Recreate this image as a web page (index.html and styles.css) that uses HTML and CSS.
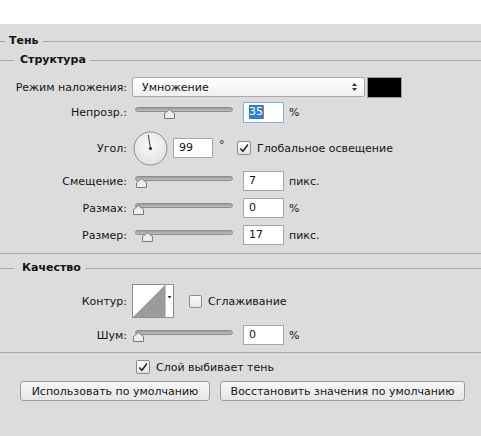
FILE: index.html
```html
<!DOCTYPE html>
<html lang="ru">
<head>
<meta charset="utf-8">
<link rel="stylesheet" href="styles.css">
</head>
<body>
<div class="top"></div>
<div class="panel">
  <div class="legend l1"><span>Тень</span></div>
  <div class="legend l2"><span>Структура</span></div>

  <div class="row r-blend">
    <div class="lbl">Режим наложения:</div>
    <div class="select"><span>Умножение</span>
      <svg class="updown" width="7" height="10" viewBox="0 0 7 10"><path d="M3.5 1 L6 4 L1 4 Z M3.5 9 L6 6 L1 6 Z" fill="#333"/></svg>
    </div>
    <div class="swatch"></div>
  </div>

  <div class="row r-opacity">
    <div class="lbl">Непрозр.:</div>
    <div class="slider"><div class="track"></div><svg class="thumb" style="left:32px" width="11" height="10" viewBox="0 0 11 10"><path d="M5.5 0.5 L10.5 4.5 L10.5 9.5 L0.5 9.5 L0.5 4.5 Z" fill="#ececec" stroke="#7a7a7a"/></svg></div>
    <div class="num focus"><span class="sel">35</span><span class="caret"></span></div>
    <div class="unit">%</div>
  </div>

  <div class="row r-angle">
    <div class="lbl">Угол:</div>
    <svg class="dial" width="35" height="35" viewBox="0 0 35 35">
      <defs><radialGradient id="dg" cx="50%" cy="40%" r="60%"><stop offset="0" stop-color="#fafafa"/><stop offset="1" stop-color="#e2e2e2"/></radialGradient></defs>
      <circle cx="17.5" cy="17.5" r="16.5" fill="url(#dg)" stroke="#8c8c8c"/>
      <line x1="17.5" y1="17.5" x2="15.3" y2="3.8" stroke="#333" stroke-width="1"/>
      <circle cx="17.5" cy="17.5" r="1.6" fill="#222"/>
    </svg>
    <div class="num n-angle">99</div>
    <div class="deg">°</div>
    <div class="cb checked"><svg width="13" height="13" viewBox="0 0 13 13"><path d="M2.5 6.5 L5.3 9.5 L10.8 2.2" fill="none" stroke="#222" stroke-width="1.6"/></svg></div>
    <div class="cbtext">Глобальное освещение</div>
  </div>

  <div class="row r-offset">
    <div class="lbl">Смещение:</div>
    <div class="slider"><div class="track"></div><svg class="thumb" style="left:4px" width="11" height="10" viewBox="0 0 11 10"><path d="M5.5 0.5 L10.5 4.5 L10.5 9.5 L0.5 9.5 L0.5 4.5 Z" fill="#ececec" stroke="#7a7a7a"/></svg></div>
    <div class="num">7</div>
    <div class="unit">пикс.</div>
  </div>

  <div class="row r-spread">
    <div class="lbl">Размах:</div>
    <div class="slider"><div class="track"></div><svg class="thumb" style="left:1px" width="11" height="10" viewBox="0 0 11 10"><path d="M5.5 0.5 L10.5 4.5 L10.5 9.5 L0.5 9.5 L0.5 4.5 Z" fill="#ececec" stroke="#7a7a7a"/></svg></div>
    <div class="num">0</div>
    <div class="unit">%</div>
  </div>

  <div class="row r-size">
    <div class="lbl">Размер:</div>
    <div class="slider"><div class="track"></div><svg class="thumb" style="left:10px" width="11" height="10" viewBox="0 0 11 10"><path d="M5.5 0.5 L10.5 4.5 L10.5 9.5 L0.5 9.5 L0.5 4.5 Z" fill="#ececec" stroke="#7a7a7a"/></svg></div>
    <div class="num">17</div>
    <div class="unit">пикс.</div>
  </div>

  <div class="sep s1"></div>

  <div class="legend l3"><span>Качество</span></div>

  <div class="row r-contour">
    <div class="lbl">Контур:</div>
    <svg class="contour" width="42" height="34" viewBox="0 0 42 34">
      <rect x="0.5" y="0.5" width="41" height="33" fill="#ffffff" stroke="#8e8e8e"/>
      <path d="M1 33 L33 1 L33 33 Z" fill="#9b9b9b"/>
      <line x1="33.5" y1="1" x2="33.5" y2="33" stroke="#c4c4c4"/>
      <path d="M35.5 12 L39.5 12 L37.5 14.5 Z" fill="#333"/>
    </svg>
    <div class="cb cb-smooth"></div>
    <div class="cbtext">Сглаживание</div>
  </div>

  <div class="row r-noise">
    <div class="lbl">Шум:</div>
    <div class="slider"><div class="track"></div><svg class="thumb" style="left:1px" width="11" height="10" viewBox="0 0 11 10"><path d="M5.5 0.5 L10.5 4.5 L10.5 9.5 L0.5 9.5 L0.5 4.5 Z" fill="#ececec" stroke="#7a7a7a"/></svg></div>
    <div class="num">0</div>
    <div class="unit">%</div>
  </div>

  <div class="sep s2"></div>

  <div class="knock">
    <div class="cb checked"><svg width="13" height="13" viewBox="0 0 13 13"><path d="M2.5 6.5 L5.3 9.5 L10.8 2.2" fill="none" stroke="#222" stroke-width="1.6"/></svg></div>
    <div class="cbtext">Слой выбивает тень</div>
  </div>

  <div class="buttons">
    <div class="btn b1">Использовать по умолчанию</div>
    <div class="btn b2">Восстановить значения по умолчанию</div>
  </div>
</div>
</body>
</html>
```

FILE: styles.css
```css
* { box-sizing: border-box; }
html, body { margin: 0; padding: 0; }
body {
  width: 481px;
  height: 436px;
  overflow: hidden;
  background: #dcdcdc;
  font-family: "DejaVu Sans", Verdana, sans-serif;
  font-size: 11px;
  color: #141414;
}
.top { height: 24px; background: #ffffff; }
.panel { background: #dcdcdc; height: 412px; padding-top: 10px; }

.legend {
  display: flex;
  align-items: center;
  height: 14px;
  font-weight: bold;
}
.legend::before, .legend::after {
  content: "";
  height: 1px;
  background: #a9a9a9;
}
.legend::after { flex: 1; margin-left: 4px; }
.legend span { line-height: 14px; }
.l1::before { width: 5px; margin-right: 4px; }
.l2 { margin-top: 5px; }
.l2::before { width: 14px; margin-right: 6px; }
.l3 { margin-top: 7px; }
.l3::before { width: 14px; margin-right: 8px; }

.row {
  display: flex;
  align-items: center;
  height: 20px;
}
.lbl {
  width: 127px;
  text-align: right;
  margin-right: 5px;
  flex: none;
  white-space: nowrap;
}
.r-blend { margin-top: 10px; }
.r-opacity { margin-top: 5px; }
.r-angle { margin-top: 8px; height: 36px; }
.r-offset { margin-top: 5px; }
.r-spread { margin-top: 7px; }
.r-size { margin-top: 7px; }
.r-contour { margin-top: 9px; height: 34px; }
.r-noise { margin-top: 7px; }

.select {
  width: 233px;
  height: 20px;
  border: 1px solid #a8a8a8;
  border-radius: 2px;
  background: linear-gradient(#ffffff, #f0f0f0);
  display: flex;
  align-items: center;
  padding-left: 9px;
  padding-right: 6px;
}
.select span { flex: 1; }
.swatch {
  width: 35px;
  height: 21px;
  margin-left: 2px;
  background: #000;
  border: 1px solid #9a9a9a;
}

.slider {
  position: relative;
  width: 103px;
  height: 20px;
  margin-right: 8px;
  flex: none;
}
.track {
  position: absolute;
  left: 3px;
  right: 2px;
  top: 5px;
  height: 5px;
  border-radius: 3px;
  background: linear-gradient(#9c9c9c, #c0c0c0);
  border: 1px solid #8c8c8c;
}
.thumb { position: absolute; top: 7px; }

.num {
  width: 41px;
  height: 20px;
  border: 1px solid #a6a6a6;
  background: #fff;
  padding-left: 5px;
  line-height: 18px;
  flex: none;
  display: flex;
  align-items: center;
}
.num.focus { border-color: #7fb0e4; height: 21px; }
.sel { background: #2f7fd8; color: #fff; line-height: 14px; padding: 0 0 0 0; }
.caret { width: 1px; height: 14px; background: #d76b2a; }
.unit { margin-left: 5px; }

.dial { margin-left: 1px; flex: none; }
.n-angle { margin-left: 5px; width: 40px; }
.deg { margin-left: 6px; margin-top: -8px; width: 12px; }

.cb {
  width: 14px;
  height: 14px;
  border: 1px solid #8a8a8a;
  border-radius: 2px;
  background: linear-gradient(#fbfbfb, #e6e6e6);
  flex: none;
  display: flex;
}
.cb svg { display: block; }
.r-angle .cb { margin-left: 6px; }
.cbtext { margin-left: 6px; white-space: nowrap; }
.contour { flex: none; }
.cb-smooth { margin-left: 15px; width: 13px; height: 13px; }

.sep { height: 1px; background: #a9a9a9; }
.s1 { margin-top: 8px; }
.s2 { margin-top: 7px; }

.knock {
  display: flex;
  align-items: center;
  margin-top: 7px;
  height: 14px;
  padding-left: 136px;
}

.buttons {
  display: flex;
  margin-top: 7px;
  padding-left: 20px;
  gap: 10px;
}
.btn {
  height: 20px;
  border: 1px solid #9c9c9c;
  border-radius: 3px;
  background: linear-gradient(#f8f8f8, #e6e6e6);
  display: flex;
  align-items: center;
  justify-content: center;
  white-space: nowrap;
}
.b1 { width: 190px; }
.b2 { width: 245px; }
```
